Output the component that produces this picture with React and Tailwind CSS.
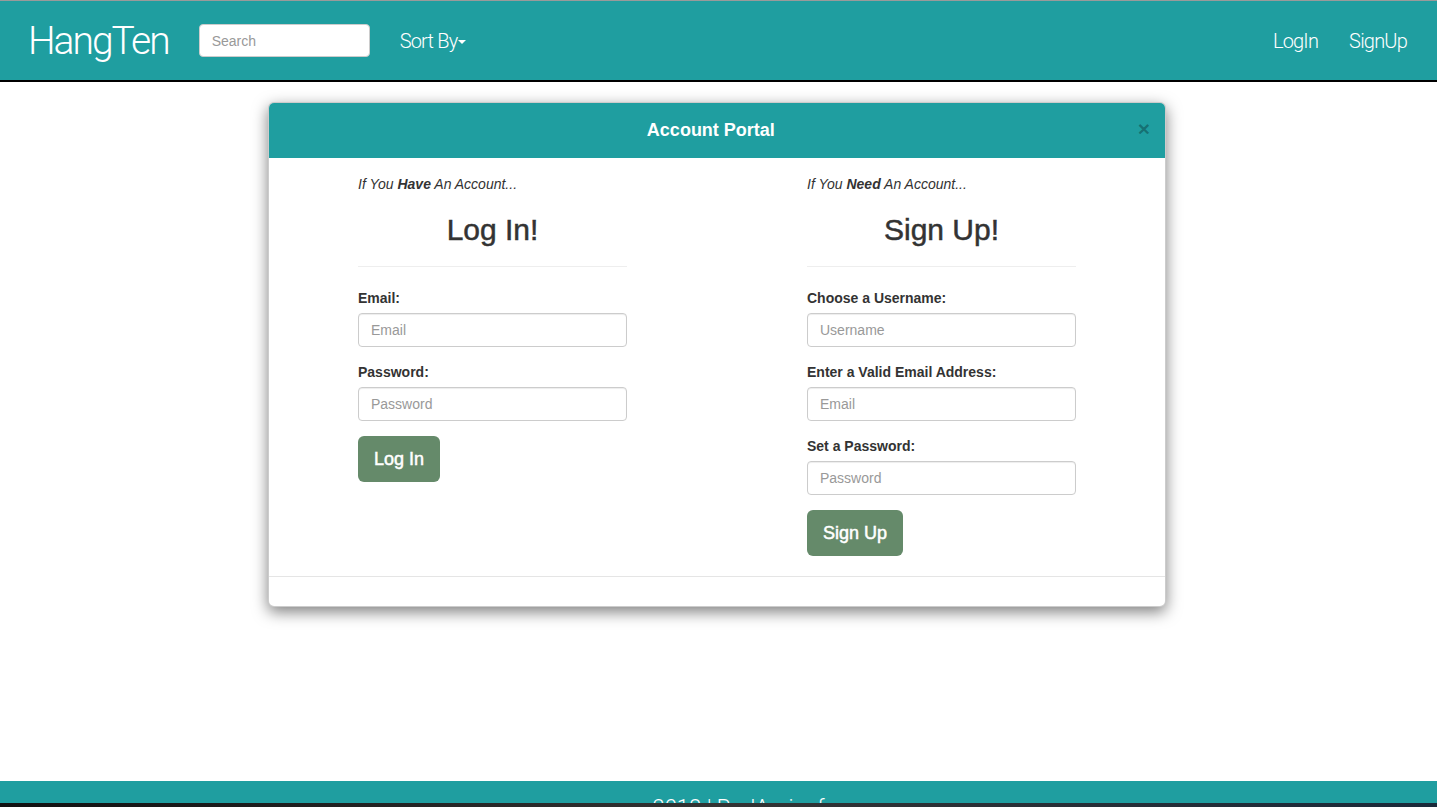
import React from 'react';

const teal = 'bg-[#1f9ea0]';

function Field({ label, placeholder, type = 'text' }) {
  return (
    <div className="mb-[15px]">
      <label className="block text-[14px] leading-5 font-bold text-[#333] mb-[5px]">{label}</label>
      <input
        type={type}
        placeholder={placeholder}
        className="block w-full h-[34px] px-3 text-[14px] text-[#555] placeholder:text-[#999] border border-[#ccc] rounded-[4px] shadow-[inset_0_1px_1px_rgba(0,0,0,0.075)] outline-none"
      />
    </div>
  );
}

function Column({ strong, title, fields, button }) {
  return (
    <div className="w-[269px]">
      <p className="text-[14px] leading-5 italic text-[#333] pt-[1px]">
        If You <b>{strong}</b> An Account...
      </p>
      <h2 className="mt-[19px] text-[30px] leading-[33px] text-center text-[#333] [-webkit-text-stroke:0.5px_#333]">{title}</h2>
      <hr className="mt-5 mb-[21px] border-0 border-t border-[#eee]" />
      {fields.map((f) => (
        <Field key={f.label} {...f} />
      ))}
      <button className="h-[46px] px-4 rounded-[6px] bg-[#658a6a] text-white text-[18px] [-webkit-text-stroke:0.5px_#fff]">
        {button}
      </button>
    </div>
  );
}

export default function App() {
  return (
    <div className="h-[807px] flex flex-col overflow-hidden bg-white font-['Liberation_Sans',Arial,sans-serif]">
      {/* Navbar */}
      <header className={`${teal} h-[82px] border-t border-[#9a9a9a] border-b-2 border-b-black flex items-center px-7 shrink-0`}>
        <a className="text-white text-[39px] font-light font-['Roboto',sans-serif] tracking-[-2px] mt-[1px]">HangTen</a>
        <input
          placeholder="Search"
          className="ml-[30px] w-[171px] h-[33px] bg-white rounded-[4px] border border-[#ccc] px-3 text-[14px] placeholder:text-[#999] outline-none"
        />
        <button className="ml-[30px] flex items-center text-white text-[20px] font-light font-['Roboto',sans-serif] tracking-[-0.8px]">
          Sort By
          <span className="ml-[1px] mt-[3px] w-0 h-0 border-x-[4px] border-x-transparent border-t-[4px] border-t-white" />
        </button>
        <nav className="ml-auto flex items-center gap-[31px] pr-[2px] text-white text-[20px] font-light font-['Roboto',sans-serif] tracking-[-0.8px]">
          <a>LogIn</a>
          <a>SignUp</a>
        </nav>
      </header>

      {/* Main */}
      <main className="flex-1 pt-5">
        <div className="w-[898px] ml-[268px] bg-white border border-black/20 rounded-[6px] shadow-[0_5px_15px_rgba(0,0,0,0.5)] overflow-hidden">
          <div className={`${teal} h-[55px] flex items-center px-[15px]`}>
            <h4 className="flex-1 text-center text-white text-[18px] font-bold">Account Portal</h4>
            <button className="text-[21px] font-bold leading-none text-black/30 -mt-[4px]">×</button>
          </div>
          <div className="flex pl-[89px] gap-[180px] pt-[15px] pb-5">
            <Column
              strong="Have"
              title="Log In!"
              button="Log In"
              fields={[
                { label: 'Email:', placeholder: 'Email' },
                { label: 'Password:', placeholder: 'Password', type: 'password' },
              ]}
            />
            <Column
              strong="Need"
              title="Sign Up!"
              button="Sign Up"
              fields={[
                { label: 'Choose a Username:', placeholder: 'Username' },
                { label: 'Enter a Valid Email Address:', placeholder: 'Email' },
                { label: 'Set a Password:', placeholder: 'Password', type: 'password' },
              ]}
            />
          </div>
          <div className="h-[30px] border-t border-[#e5e5e5]" />
        </div>
      </main>

      {/* Footer */}
      <footer className={`${teal} h-[22px] shrink-0 overflow-hidden text-center`}>
        <p className="pt-[15px] pl-[40px] text-white text-[22px] font-light font-['Roboto',sans-serif] leading-6">2018 | RudAminaf</p>
      </footer>
      <div className="h-[4px] shrink-0 bg-gradient-to-r from-[#111] via-[#333] to-[#1a2a3a]" />
    </div>
  );
}
